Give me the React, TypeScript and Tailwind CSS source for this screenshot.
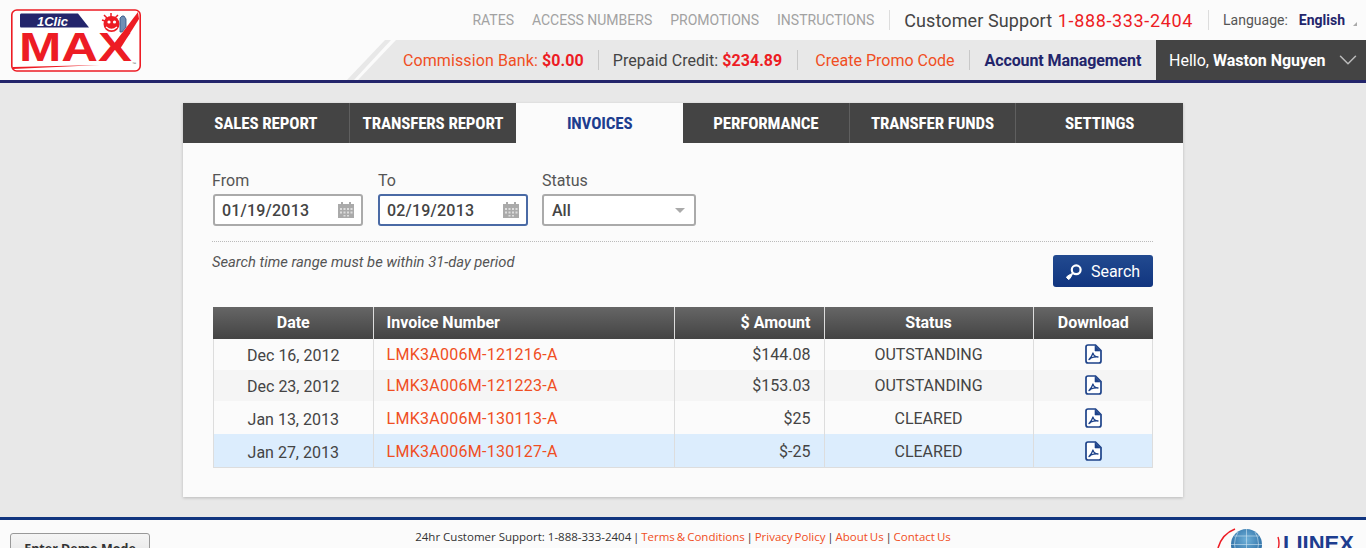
import { ChevronDown } from 'lucide-react'

const tabs = ['SALES REPORT', 'TRANSFERS REPORT', 'INVOICES', 'PERFORMANCE', 'TRANSFER FUNDS', 'SETTINGS']

// row heights and text nudges differ per row in the original page
const invoices = [
  { date: 'Dec 16, 2012', number: 'LMK3A006M-121216-A', amount: '$144.08', status: 'OUTSTANDING', row: 'h-[31px] bg-[#fbfbfb]', datePad: 'pt-[2px]', pad: '', iconPad: 'pb-[2px]' },
  { date: 'Dec 23, 2012', number: 'LMK3A006M-121223-A', amount: '$153.03', status: 'OUTSTANDING', row: 'h-[31px] bg-[#f5f5f5]', datePad: 'pt-[2px]', pad: '', iconPad: 'pb-[2px]' },
  { date: 'Jan 13, 2013', number: 'LMK3A006M-130113-A', amount: '$25', status: 'CLEARED', row: 'h-[33px] bg-[#fbfbfb]', datePad: 'pt-[4px]', pad: 'pt-[2px]', iconPad: '' },
  { date: 'Jan 27, 2013', number: 'LMK3A006M-130127-A', amount: '$-25', status: 'CLEARED', row: 'h-[33px] bg-[#dcedfd]', datePad: 'pt-[6px]', pad: 'pt-[4px]', iconPad: 'pt-[2px]' },
]

function Logo() {
  return (
    <svg width="132" height="64" viewBox="0 0 132 64" className="shrink-0">
      <rect x="1.8" y="1" width="128.4" height="61" rx="5" fill="#fff" stroke="#ed1c24" strokeWidth="1.6" />
      <path d="M11 4.5 H68 L79 18.5 H11 Q10 18.5 10 17 V6 Q10 4.5 11 4.5 Z" fill="#23256b" />
      <text x="27" y="16.5" fontSize="13" fontWeight="900" fontStyle="italic" fill="#fff" fontFamily="'Liberation Sans', sans-serif">1Clic</text>
      <text x="9" y="52" fontSize="40" fontWeight="900" fill="#ed1c24" textLength="113" lengthAdjust="spacingAndGlyphs" fontFamily="'Liberation Sans', sans-serif">MAX</text>
      <path d="M100 40 L128 3 L129 10 L110 40 Z" fill="#ed1c24" />
      <circle cx="101.5" cy="15" r="8" fill="#ed1c24" />
      <path d="M94 6 L97 9 M101 4 V8 M108 6 L105 9 M92 11 L95 12" stroke="#ed1c24" strokeWidth="1.5" />
      <circle cx="99" cy="13" r="1.6" fill="#fff" />
      <circle cx="104.5" cy="13" r="1.6" fill="#fff" />
      <path d="M96 18 Q101.5 23 107 18" stroke="#fff" strokeWidth="1.3" fill="none" />
      <path d="M110 9 L112 7 L114 7 L116 10 L116 18 L112 23 L110 23 Z" fill="#6f8fb5" stroke="#2f4f80" strokeWidth="0.8" />
      <path d="M3 60 L90 56 L3 58 Z" fill="#ed1c24" />
      <text x="122" y="56" fontSize="4" fill="#555" fontFamily="'Liberation Sans', sans-serif">™</text>
    </svg>
  )
}

function CalendarIcon() {
  return (
    <svg width="16" height="16" viewBox="0 0 16 16" className="shrink-0">
      <path d="M0 2 H3 V0 H5 V2 H11 V0 H13 V2 H16 V16 H0 Z" fill="#aaa" />
      <path d="M2 6 h2 v2 h-2 z M5.5 6 h2 v2 h-2 z M9 6 h2 v2 h-2 z M12.5 6 h2 v2 h-2 z M2 9.5 h2 v2 h-2 z M5.5 9.5 h2 v2 h-2 z M9 9.5 h2 v2 h-2 z M12.5 9.5 h2 v2 h-2 z M5.5 13 h2 v1.5 h-2 z M9 13 h2 v1.5 h-2 z" fill="#ddd" />
    </svg>
  )
}

function PdfIcon() {
  return (
    <svg width="17" height="20" viewBox="0 0 17 20" className="mx-auto block">
      <path d="M3 1 H10.5 L16 6.5 V17 Q16 19 14 19 H3 Q1 19 1 17 V3 Q1 1 3 1 Z" fill="#fff" stroke="#1d4289" strokeWidth="1.7" />
      <path d="M10 1.5 V7 H15.5" fill="#1d4289" stroke="#1d4289" strokeWidth="0.6" />
      <path d="M4 15.5 Q6.5 13.5 8 9 Q8.5 12.5 13 13 Q9 12.8 6 14 Q5 15.6 4 15.5 Z" fill="none" stroke="#1d4289" strokeWidth="1.3" strokeLinejoin="round" />
    </svg>
  )
}

function SearchIcon() {
  return (
    <svg width="16" height="16" viewBox="0 0 16 16" className="shrink-0">
      <circle cx="10.2" cy="5.8" r="4.4" fill="none" stroke="#fff" strokeWidth="2.2" />
      <path d="M7 9 L1.5 12 L0.5 13.5 L2.5 15.5 L4 14.5 L7 9 Z" fill="#fff" stroke="#fff" strokeWidth="1" />
    </svg>
  )
}

function Field({ label, value, focused }: { label: string; value: string; focused?: boolean }) {
  return (
    <div className="w-[150px]">
      <div className={`mb-[3px] text-[16px] leading-[20px] tracking-[0.1px] text-[#555] ${focused ? '' : '-ml-px'}`}>{label}</div>
      <div className={`flex h-[32px] items-center justify-between rounded-[3px] border-2 bg-white px-[7px] ${focused ? 'border-[#4a6aa5]' : 'border-[#aaa]'}`}>
        <span className="pt-[1px] text-[16px] font-medium tracking-[0.2px] text-[#444]">{value}</span>
        <CalendarIcon />
      </div>
    </div>
  )
}

export default function App() {
  return (
    <div className="flex h-screen flex-col overflow-hidden bg-[#e8e8e8] font-['Roboto',sans-serif]">
      <header className="flex h-[83px] shrink-0 border-b-[3px] border-[#23256b] bg-[#fbfbfb]">
        <div className="pl-[10px] pt-[9px]">
          <Logo />
        </div>
        <div className="flex flex-1 flex-col">
          <div className="flex h-[40px] items-center justify-end whitespace-nowrap">
            <div className="flex gap-[18px] text-[14px] text-[#a2a2a2]">
              <span>RATES</span>
              <span>ACCESS NUMBERS</span>
              <span>PROMOTIONS</span>
              <span>INSTRUCTIONS</span>
            </div>
            <div className="ml-[15px] h-[20px] w-px bg-[#ddd]" />
            <div className="ml-[14px] text-[18px] tracking-[0.1px] text-[#444]">
              Customer Support <span className="ml-[1px] tracking-[0.65px] text-[#ed1c24]">1-888-333-2404</span>
            </div>
            <div className="ml-[15px] h-[20px] w-px bg-[#ddd]" />
            <span className="ml-[14px] text-[14px] text-[#555]">Language:</span>
            <span className="ml-[11px] text-[14px] font-bold text-[#23256b]">English</span>
            <span className="ml-[8px] mr-[9px] mt-[7px] h-0 w-0 border-b-[4px] border-l-[4px] border-b-[#aaa] border-l-transparent" />
          </div>
          <div className="flex h-[40px] pl-[205px]">
            <svg width="51" height="40" viewBox="0 0 51 40" className="shrink-0">
              <path d="M0 40 L38 0 H44 L7 40 Z" fill="#e8e8e8" />
              <path d="M11 40 L49 0 H51 V40 Z" fill="#e8e8e8" />
            </svg>
            <div className="flex flex-1 items-center whitespace-nowrap bg-[#e8e8e8] pl-[5px] text-[16px]">
              <span className="pt-[1px] tracking-[0.1px] text-[#f04e23]">
                Commission Bank: <span className="font-bold text-[#ed1c24]">$0.00</span>
              </span>
              <div className="ml-[14px] mr-[14px] h-[20px] w-px bg-[#c8c8c8]" />
              <span className="pt-[1px] tracking-[0.05px] text-[#444]">
                Prepaid Credit: <span className="font-bold text-[#ed1c24]">$234.89</span>
              </span>
              <div className="ml-[15px] mr-[17px] h-[20px] w-px bg-[#c8c8c8]" />
              <span className="mt-[2px] text-[#f04e23]">Create Promo Code</span>
              <div className="ml-[14px] mr-[15px] h-[20px] w-px bg-[#c8c8c8]" />
              <span className="pt-[1px] font-bold tracking-[-0.1px] text-[#23256b]">Account Management</span>
              <div className="ml-auto flex h-full w-[210px] items-center justify-between bg-[#444] pl-[13px] pr-[3px] text-white">
                <span className="pt-[1px]">
                  Hello, <span className="font-bold">Waston Nguyen</span>
                </span>
                <ChevronDown size={30} strokeWidth={1.2} className="text-[#bbb]" />
              </div>
            </div>
          </div>
        </div>
      </header>

      <main className="mx-auto mt-[20px] h-[394px] w-[1000px] shrink-0 bg-[#fbfbfb] shadow-[0_1px_3px_rgba(0,0,0,0.2)]">
        <div className="grid h-[40px] grid-cols-6 bg-[#444]">
          {tabs.map((tab, i) => (
            <div
              key={tab}
              className={`flex items-center justify-center pt-[1px] text-[17px] font-bold tracking-[-0.15px] [font-stretch:75%] ${
                tab === 'INVOICES' ? 'bg-[#fbfbfb] text-[#1d3d8f]' : 'text-white'
              } ${i !== 1 && i !== 2 && i !== 5 ? 'border-r border-[#5f5f5f]' : ''}`}
            >
              {tab}
            </div>
          ))}
        </div>

        <div className="px-[30px] pt-[28px]">
          <div className="flex gap-[15px]">
            <Field label="From" value="01/19/2013" />
            <Field label="To" value="02/19/2013" focused />
            <div className="-ml-[1px] w-[154px]">
              <div className="mb-[3px] text-[16px] leading-[20px] text-[#555]">Status</div>
              <div className="flex h-[32px] items-center justify-between rounded-[3px] border-2 border-[#aaa] bg-white pl-[8px] pr-[9px]">
                <span className="pt-[1px] text-[16px] font-medium text-[#444]">All</span>
                <span className="h-0 w-0 border-x-[5px] border-t-[5px] border-x-transparent border-t-[#aaa]" />
              </div>
            </div>
          </div>

          <div className="-ml-px mt-[15px] border-t border-dotted border-[#bbb]" />

          <div className="-ml-px flex items-start justify-between pt-[13px]">
            <span className="mt-[-4px] text-[14.75px] italic text-[#555]">Search time range must be within 31-day period</span>
            <button className="flex h-[32px] w-[100px] items-center justify-center gap-[9px] rounded-[3px] bg-gradient-to-b from-[#224a90] to-[#11357f] pt-[1px] text-[16px] text-white">
              <SearchIcon />
              Search
            </button>
          </div>

          <table className="mt-[20px] w-[940px] table-fixed border-collapse text-[16px] text-[#444]">
            <colgroup>
              <col className="w-[160px]" />
              <col className="w-[301px]" />
              <col className="w-[150px]" />
              <col className="w-[209px]" />
              <col className="w-[120px]" />
            </colgroup>
            <thead>
              <tr className="h-[32px] bg-gradient-to-b from-[#666] to-[#444] text-white">
                <th className="pl-[1px] font-bold">Date</th>
                <th className="border-l border-[#ddd] pl-[13px] text-left font-bold">Invoice Number</th>
                <th className="border-l border-[#ddd] pr-[13px] text-right font-bold">$ Amount</th>
                <th className="border-l border-[#ddd] font-bold">Status</th>
                <th className="border-l border-[#ddd] font-bold">Download</th>
              </tr>
            </thead>
            <tbody>
              {invoices.map((inv) => (
                <tr key={inv.number} className={`${inv.row} border-[#ddd] last:border-b`}>
                  <td className={`pl-[1px] text-center shadow-[inset_1px_0_0_#ddd] ${inv.datePad}`}>{inv.date}</td>
                  <td className={`border-l border-[#ddd] pl-[13px] tracking-[0.28px] text-[#f04e23] ${inv.pad}`}>{inv.number}</td>
                  <td className={`border-l border-[#ddd] pr-[13px] text-right ${inv.pad}`}>{inv.amount}</td>
                  <td className={`border-l border-[#ddd] text-center ${inv.pad}`}>{inv.status}</td>
                  <td className={`border-l border-[#ddd] shadow-[inset_-1px_0_0_#ddd] ${inv.iconPad}`}>
                    <PdfIcon />
                  </td>
                </tr>
              ))}
            </tbody>
          </table>
        </div>
      </main>

      <footer className="relative mt-[20px] flex flex-1 justify-center border-t-[3px] border-[#11357f] bg-[#fbfbfb] pt-[8px] font-['Open_Sans',sans-serif] text-[11.5px] leading-[17px] text-[#333]">
        <button className="absolute left-[10px] top-[13px] h-[40px] w-[140px] rounded-[3px] border border-[#999] bg-gradient-to-b from-[#f5f5f5] to-[#ddd] pb-[10px] text-[12.5px] font-bold text-[#333]">
          Enter Demo Mode
        </button>
        <div className="whitespace-nowrap">
          24hr Customer Support: 1-888-333-2404<span className="mx-[-1.2px]"> | </span><span className="text-[#f04e23] [word-spacing:-1px]">Terms &amp; Conditions</span><span className="mx-[-1.2px]"> | </span><span className="text-[#f04e23] [word-spacing:-1px]">Privacy Policy</span><span className="mx-[-1.2px]"> | </span><span className="text-[#f04e23] [word-spacing:-1px]">About Us</span><span className="mx-[-1.2px]"> | </span><span className="text-[#f04e23] [word-spacing:-1px]">Contact Us</span>
        </div>
        <div className="absolute left-[1217px] top-[8px] flex items-start">
          <svg width="64" height="40" viewBox="0 0 64 40" className="shrink-0">
            <defs>
              <radialGradient id="globe" cx="0.5" cy="0.35" r="0.7">
                <stop offset="0" stopColor="#6fb0d8" />
                <stop offset="1" stopColor="#1d5f99" />
              </radialGradient>
            </defs>
            <path d="M1 20 Q5 6 18 1" stroke="#ed1c24" strokeWidth="1.6" fill="none" />
            <circle cx="29.5" cy="16.5" r="15.5" fill="url(#globe)" />
            <path d="M14 16.5 H45 M17 8 H42 M29.5 1 V32 M21 4 Q14 16 21 28 M38 4 Q45 16 38 28" stroke="#cfe4f2" strokeWidth="0.6" fill="none" />
            <path d="M61 9 Q63 15 61 21" stroke="#ed1c24" strokeWidth="1.4" fill="none" />
          </svg>
          <span className="ml-[2px] mt-[2px] font-['Liberation_Sans',sans-serif] text-[22px] leading-[28px] font-bold text-[#1d3d8f]">LIINEX</span>
        </div>
      </footer>
    </div>
  )
}
